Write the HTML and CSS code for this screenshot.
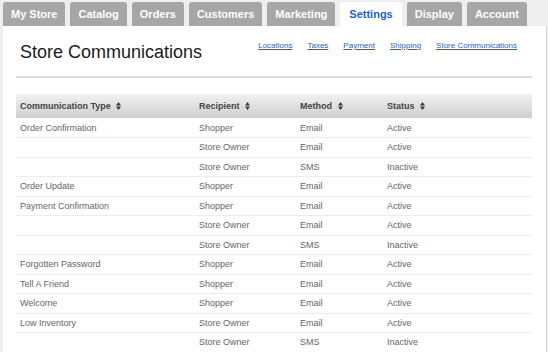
FILE: index.html
```html
<!DOCTYPE html>
<html lang="en">
<head>
  <meta charset="UTF-8">
  <meta name="viewport" content="width=device-width, initial-scale=1.0">
  <title>Store Communications</title>
  <link rel="stylesheet" href="styles.css">
</head>
<body>
  <ul class="tabs">
    <li class="tab">My Store</li>
    <li class="tab">Catalog</li>
    <li class="tab">Orders</li>
    <li class="tab">Customers</li>
    <li class="tab">Marketing</li>
    <li class="tab active">Settings</li>
    <li class="tab">Display</li>
    <li class="tab">Account</li>
  </ul>
  <div class="panel">
    <div class="page-head">
      <h1>Store Communications</h1>
      <div class="sub-nav">
        <a href="#">Locations</a>
        <a href="#">Taxes</a>
        <a href="#">Payment</a>
        <a href="#">Shipping</a>
        <a href="#">Store Communications</a>
      </div>
    </div>

    <table class="comms">
      <thead>
        <tr>
          <th class="c-type">Communication Type <svg class="sort" width="5" height="8" viewBox="0 0 5 8"><path d="M0 3.4 2.5 0 5 3.4Z M0 4.6 5 4.6 2.5 8Z"/></svg></th>
          <th class="c-rec">Recipient <svg class="sort" width="5" height="8" viewBox="0 0 5 8"><path d="M0 3.4 2.5 0 5 3.4Z M0 4.6 5 4.6 2.5 8Z"/></svg></th>
          <th class="c-meth">Method <svg class="sort" width="5" height="8" viewBox="0 0 5 8"><path d="M0 3.4 2.5 0 5 3.4Z M0 4.6 5 4.6 2.5 8Z"/></svg></th>
          <th class="c-stat">Status <svg class="sort" width="5" height="8" viewBox="0 0 5 8"><path d="M0 3.4 2.5 0 5 3.4Z M0 4.6 5 4.6 2.5 8Z"/></svg></th>
        </tr>
      </thead>
      <tbody>
        <tr><td>Order Confirmation</td><td>Shopper</td><td>Email</td><td>Active</td></tr>
        <tr><td></td><td>Store Owner</td><td>Email</td><td>Active</td></tr>
        <tr><td></td><td>Store Owner</td><td>SMS</td><td>Inactive</td></tr>
        <tr><td>Order Update</td><td>Shopper</td><td>Email</td><td>Active</td></tr>
        <tr><td>Payment Confirmation</td><td>Shopper</td><td>Email</td><td>Active</td></tr>
        <tr><td></td><td>Store Owner</td><td>Email</td><td>Active</td></tr>
        <tr><td></td><td>Store Owner</td><td>SMS</td><td>Inactive</td></tr>
        <tr><td>Forgotten Password</td><td>Shopper</td><td>Email</td><td>Active</td></tr>
        <tr><td>Tell A Friend</td><td>Shopper</td><td>Email</td><td>Active</td></tr>
        <tr><td>Welcome</td><td>Shopper</td><td>Email</td><td>Active</td></tr>
        <tr><td>Low Inventory</td><td>Store Owner</td><td>Email</td><td>Active</td></tr>
        <tr><td></td><td>Store Owner</td><td>SMS</td><td>Inactive</td></tr>
      </tbody>
    </table>
  </div>
</body>
</html>
```

FILE: styles.css
```css
*{
  font-family: "Liberation Sans", Arial, sans-serif;
  box-sizing: border-box;
}
body{
  margin: 0;
  background: #eeeeee;
  overflow: hidden;
}
.tabs{
  list-style: none;
  margin: 0;
  padding: 2px 0 0 3px;
  display: flex;
  gap: 5px;
}
.tab{
  height: 24px;
  line-height: 24px;
  padding: 0 8px;
  background: #a6a6a6;
  color: #fff;
  font-size: 11px;
  font-weight: bold;
  border-radius: 3px 3px 0 0;
}
.tab.active{
  background: #fff;
  color: #1f62c9;
  padding: 0 9px;
}
.panel{
  background: #fff;
  margin: 0 1px 0 3px;
  border-right: 1px solid #d6d6d6;
  padding: 15px 14px 0 13px;
  min-height: 330px;
}
.page-head{
  display: flex;
  justify-content: space-between;
  align-items: flex-start;
  border-bottom: 2px solid #dcdcdc;
  padding-bottom: 14px;
}
h1{
  margin: 0;
  margin-left: 4px;
  margin-top: 1px;
  font-size: 18px;
  line-height: 20px;
  font-weight: normal;
  color: #1a1a1a;
}
.sub-nav{
  display: flex;
  gap: 15px;
  padding-right: 15px;
}
.sub-nav a{
  font-size: 8px;
  line-height: 10px;
  color: #1f5fc7;
  text-decoration: underline;
}
.comms{
  width: 100%;
  margin-top: 16px;
  border-collapse: collapse;
  table-layout: fixed;
}
.comms th{
  height: 24px;
  padding: 0 4px;
  text-align: left;
  font-size: 9px;
  font-weight: bold;
  color: #444;
  background: linear-gradient(#f1f1f1, #cfcfcf);
  white-space: nowrap;
}
.c-type{ width: 179px; }
.c-rec{ width: 101px; }
.c-meth{ width: 87px; }
.sort{
  margin-left: 3px;
  vertical-align: -1px;
  fill: #3a3a3a;
}
.comms td{
  height: 19.5px;
  padding: 0 4px;
  font-size: 9px;
  color: #666;
  border-bottom: 1px solid #ececec;
  white-space: nowrap;
}
```
